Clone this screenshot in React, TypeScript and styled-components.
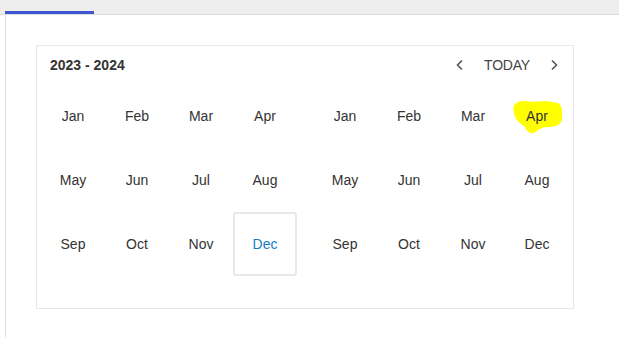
import React from "react";
import styled, { createGlobalStyle } from "styled-components";

const GlobalStyle = createGlobalStyle`
  html, body {
    margin: 0;
    padding: 0;
    background: #ffffff;
    font-family: "Liberation Sans", Arial, sans-serif;
  }
`;

const Page = styled.div`
  width: 619px;
  height: 337px;
  overflow: hidden;
  background: #fff;
`;

const TabBar = styled.div`
  height: 14px;
  background: #eeeeee;
  border-bottom: 1px solid #dcdcdc;
  display: flex;
  align-items: flex-end;
  padding-left: 5px;
`;

const ActiveTab = styled.div`
  width: 89px;
  height: 3px;
  background: #3f55d1;
`;

const Body = styled.div`
  margin-left: 5px;
  border-left: 1px solid #dcdcdc;
  height: 322px;
  padding: 30px 0 0 30px;
  box-sizing: border-box;
`;

const Card = styled.div`
  width: 538px;
  height: 264px;
  box-sizing: border-box;
  border: 1px solid #e8e8e8;
  padding: 0 4px 0 4px;
`;

const Header = styled.div`
  height: 38px;
  display: flex;
  align-items: center;
  justify-content: space-between;
  padding: 0 10px 0 9px;
`;

const Title = styled.div`
  font-size: 14px;
  font-weight: bold;
  color: #333;
`;

const Nav = styled.div`
  display: flex;
  align-items: center;
  gap: 19px;
  color: #444;
`;

const Today = styled.span`
  font-size: 14px;
  color: #444;
  letter-spacing: -0.2px;
`;

const Panels = styled.div`
  display: flex;
  gap: 16px;
`;

const Grid = styled.div`
  display: grid;
  grid-template-columns: repeat(4, 64px);
  grid-auto-rows: 64px;
`;

const Cell = styled.div<{ $current?: boolean }>`
  position: relative;
  display: flex;
  align-items: center;
  justify-content: center;
  font-size: 14px;
  color: ${(p) => (p.$current ? "#1a7dc4" : "#333")};
  box-sizing: border-box;
  border: 2px solid ${(p) => (p.$current ? "#e8e8e8" : "transparent")};
  border-radius: 3px;
`;

const Label = styled.span`
  position: relative;
  z-index: 1;
`;

const Marker = styled.svg`
  position: absolute;
  left: 5px;
  top: 13px;
  z-index: 0;
`;

const Chevron = ({ dir }: { dir: "left" | "right" }) => (
  <svg width="10" height="12" viewBox="0 0 10 12">
    <path
      d={dir === "left" ? "M7 1.5 L2.5 6 L7 10.5" : "M3 1.5 L7.5 6 L3 10.5"}
      fill="none"
      stroke="#555"
      strokeWidth="1.6"
    />
  </svg>
);

const months = [
  "Jan", "Feb", "Mar", "Apr",
  "May", "Jun", "Jul", "Aug",
  "Sep", "Oct", "Nov", "Dec",
];

const Highlight = () => (
  <Marker width="52" height="36" viewBox="0 0 52 36">
    <path
      d="M3 5 C8 1 14 2 20 3 C28 2 38 2 46 4 C51 7 50 14 50 20 C49 26 44 28 36 28 C30 28 26 31 22 34 C17 35 14 31 12 27 C7 24 3 20 2 14 C1 10 1 7 3 5 Z"
      fill="#ffff00"
    />
  </Marker>
);

export default function App() {
  return (
    <Page>
      <GlobalStyle />
      <TabBar>
        <ActiveTab />
      </TabBar>
      <Body>
        <Card>
          <Header>
            <Title>2023 - 2024</Title>
            <Nav>
              <Chevron dir="left" />
              <Today>TODAY</Today>
              <Chevron dir="right" />
            </Nav>
          </Header>
          <Panels>
            <Grid>
              {months.map((m) => (
                <Cell key={m} $current={m === "Dec"}>
                  <Label>{m}</Label>
                </Cell>
              ))}
            </Grid>
            <Grid>
              {months.map((m) => (
                <Cell key={m}>
                  {m === "Apr" && <Highlight />}
                  <Label>{m}</Label>
                </Cell>
              ))}
            </Grid>
          </Panels>
        </Card>
      </Body>
    </Page>
  );
}
